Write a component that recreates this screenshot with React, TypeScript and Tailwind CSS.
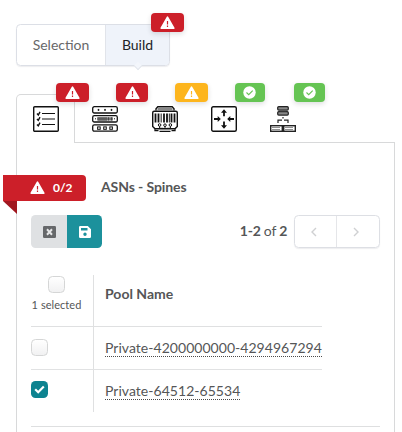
import type { ReactNode } from "react";

function WarningGlyph() {
  return (
    <svg width="15" height="14" viewBox="0 0 15 14">
      <path d="M7.5 1.2 13.8 12.2H1.2Z" fill="#fff" stroke="#fff" strokeWidth="1.6" strokeLinejoin="round" />
      <path d="M7.5 5V8.4M7.5 9.6V11" stroke="currentColor" strokeWidth="1.2" />
    </svg>
  );
}

function CheckGlyph() {
  return (
    <svg width="13" height="13" viewBox="0 0 13 13">
      <circle cx="6.5" cy="6.5" r="6.2" fill="#fff" />
      <path d="m3.5 6.5 2.2 2.2 4-4.1" fill="none" stroke="currentColor" strokeWidth="1.1" />
    </svg>
  );
}

function Badge({ className, children }: { className: string; children: ReactNode }) {
  return (
    <span className={`absolute flex h-[19px] items-center justify-center rounded-[4px] shadow-[0_2px_5px_rgba(34,36,38,0.15)] ${className}`}>
      {children}
    </span>
  );
}

function ChecklistIcon() {
  return (
    <svg width="26" height="26" viewBox="0 0 26 26" fill="none" stroke="#111">
      <rect x=".7" y=".7" width="24.6" height="24.6" rx="1" strokeWidth="1.4" />
      <path d="M9 7.5h13M9 13h13M9 18.5h13" strokeWidth="1.1" />
      <path d="m4 7.6 1.3 1.4L7 5.9M4 12.9l1.3 1.4L7 11.2M4 18.4l1.3 1.4L7 16.7" strokeWidth="1.4" />
    </svg>
  );
}

function RackIcon() {
  return (
    <svg width="26" height="26" viewBox="0 0 26 26" fill="none" stroke="#111">
      <rect x=".7" y=".7" width="24.6" height="6.3" rx="1.6" strokeWidth="1.3" />
      <rect x=".7" y="9.7" width="24.6" height="6.3" rx="1.6" strokeWidth="1.3" />
      <rect x=".7" y="18.9" width="24.6" height="6.3" rx="1.6" strokeWidth="1.3" />
      <path d="M6.5 2.9v2M5.5 3.9h2M13 2.9v2M12 3.9h2M19.5 2.9v2M18.5 3.9h2" strokeWidth=".9" />
      <rect x="5" y="11.3" width="16" height="3.2" fill="#777" stroke="none" />
      <path d="M6 12h9M6 14h9M16.5 11.3v3.2M19.5 11.3v3.2" stroke="#333" strokeWidth=".8" />
      <path d="M3 12.8h1M22 12.8h1" strokeWidth="1" />
      <rect x="5.6" y="20.9" width="2.6" height="2.4" strokeWidth="1" />
      <rect x="11.7" y="20.9" width="2.6" height="2.4" strokeWidth="1" />
      <rect x="17.8" y="20.9" width="2.6" height="2.4" strokeWidth="1" />
    </svg>
  );
}

function SwitchIcon() {
  return (
    <svg width="26" height="26" viewBox="0 0 26 26" fill="none" stroke="#111">
      <path d="M4 4.5V2.8L5.8.8h14.4L22 2.8v1.7" strokeWidth="1.4" />
      <path d="M5.5 3h15" stroke="#888" strokeWidth="2.2" />
      <path d="M2.2 5.2h21.6q1.5 0 1.5 1.5v13.7L23 22.8H3L.7 20.4V6.7q0-1.5 1.5-1.5Z" strokeWidth="1.4" />
      <path d="M3.5 7.5v9M6.5 7.5v9M12 7.5v9M15 7.5v9M19.5 7.5v9M22.5 7.5v9" strokeWidth="1.8" />
      <path d="M9.2 7.5v9M17.4 7.5v9" stroke="#444" strokeWidth="1.2" />
      <circle cx="7.6" cy="19" r="1.3" fill="#fff" />
      <circle cx="13" cy="19.2" r="1.3" fill="#fff" />
      <circle cx="18.4" cy="19" r="1.3" fill="#fff" />
      <path d="M3 23.2v1.4h3.5M23 23.2v1.4h-3.5M7.5 25.3h11" strokeWidth="1.3" />
      <path d="M7.6 20.3v2h3.8M13 20.5v2.4M18.4 20.3v2h-3.8" strokeWidth="1" />
    </svg>
  );
}

function RouterIcon() {
  return (
    <svg width="26" height="26" viewBox="0 0 26 26" fill="none" stroke="#111">
      <rect x=".7" y=".7" width="24.6" height="24.6" rx="1.5" strokeWidth="1.4" />
      <path d="M13 10.3V5.5M13 15.5v5M3 13h5M23 13h-5" strokeWidth="1.8" />
      <path d="M13 3.2 16 6.7h-6ZM13 22.8l3-3.5h-6ZM9.8 13 6.7 10v6ZM16.2 13l3.1-3v6Z" fill="#111" stroke="none" />
    </svg>
  );
}

function TopologyIcon() {
  return (
    <svg width="26" height="26" viewBox="0 0 26 26" fill="none" stroke="#222">
      <rect x="7.7" y=".7" width="10.6" height="3.4" rx="1" strokeWidth="1.2" fill="#888" />
      <rect x="7.7" y="5.7" width="10.6" height="3.4" rx="1" strokeWidth="1.2" fill="#888" />
      <path d="M9.5 4.9h7" stroke="#555" strokeWidth="1" />
      <path d="M13 11v1.5M8 17v-2.8h4M18 17v-2.8h-4" strokeWidth="1.2" />
      <rect x=".7" y="19.7" width="11.6" height="5.6" strokeWidth="1.4" />
      <rect x="13.7" y="19.7" width="11.6" height="5.6" strokeWidth="1.4" />
      <path d="M2.5 21.5h8M15.5 21.5h8M2.5 23.5h8M15.5 23.5h8" stroke="#222" strokeWidth="1" strokeDasharray="1 1" />
    </svg>
  );
}

const tabs = [
  { icon: <ChecklistIcon />, badge: <WarningGlyph />, style: "left-[39px] -top-[12px] w-[33px] bg-[#cc1f29] text-[#cc1f29]" },
  { icon: <RackIcon />, badge: <WarningGlyph />, style: "left-[41px] -top-[11px] w-[32px] bg-[#cc1f29] text-[#cc1f29]" },
  { icon: <SwitchIcon />, badge: <WarningGlyph />, style: "left-[41px] -top-[11px] w-[33px] bg-[#fdb51d] text-[#fdb51d]" },
  { icon: <RouterIcon />, badge: <CheckGlyph />, style: "left-[41px] -top-[11px] w-[30px] bg-[#65c453] text-[#65c453]" },
  { icon: <TopologyIcon />, badge: <CheckGlyph />, style: "left-[41px] -top-[11px] w-[31px] bg-[#65c453] text-[#65c453]" },
];

function Checkbox({ checked = false }: { checked?: boolean }) {
  if (checked) {
    return (
      <span className="flex size-[17px] items-center justify-center rounded-[4.5px] bg-[#0d8390]">
        <svg width="11" height="9" viewBox="0 0 11 9" fill="none" stroke="#fff" strokeWidth="2.2">
          <path d="m1.2 4.3 3 2.9L9.8 1.5" />
        </svg>
      </span>
    );
  }
  return <span className="block size-[17px] rounded-[4.5px] border border-[#d5d6d6] bg-linear-to-b from-white to-[#f1f1f2]" />;
}

function PoolRow({ name, checked, last }: { name: string; checked?: boolean; last?: boolean }) {
  return (
    <div className={`flex ${last ? "h-[42px]" : "h-[43px] border-b border-[#e1e2e3]"}`}>
      <div className={`w-[63px] border-r border-[#dfe0e1] ${last ? "pt-[11px]" : "pt-[12px]"}`}>
        <Checkbox checked={checked} />
      </div>
      <div className="pt-[12px] pl-[11px]">
        <span className="block h-[18px] border-b border-dotted border-[#4a4a4a] text-[14px] leading-[17px] tracking-[0.035px] whitespace-nowrap">{name}</span>
      </div>
    </div>
  );
}

export default function App() {
  return (
    <div className="h-[432px] w-[402px] overflow-hidden bg-white pt-[24px] pl-4 font-[Lato,sans-serif] text-[14px] text-[#555657]">
      <div className="relative flex h-[42px] w-[154px] rounded-[4.5px] border border-[#dcdfe6] shadow-[0_1px_1px_rgba(34,36,58,0.08)]">
        <div className="flex w-[89px] items-center justify-center border-r border-[#e1e4ea] pb-[2px] text-[#686869]">Selection</div>
        <div className="flex flex-1 items-center justify-center rounded-r bg-[#eff3fa] pb-[2px] text-[#202226]">Build</div>
        <span className="absolute -bottom-[4px] left-[118px] size-[6px] rotate-45 border-r border-b border-[#e3e6ec] bg-[#f3f6fb]" />
        <Badge className="-top-[12px] left-[134px] w-[33px] bg-[#cc1f29] text-[#cc1f29]">
          <WarningGlyph />
        </Badge>
      </div>

      <div className="mt-[28px] flex h-[49px] w-[379px] border-b border-[#d8d9da]">
        {tabs.map((tab, index) => (
          <div
            key={index}
            className={
              index === 0
                ? "relative h-[49px] w-[59px] shrink-0 rounded-t-[5px] border border-b-0 border-[#d8d9da] bg-white pt-[11px] pl-[16px]"
                : "relative h-[48px] w-[59.3px] shrink-0 pt-[12px] pl-[17.4px]"
            }
          >
            {tab.icon}
            <Badge className={tab.style}>{tab.badge}</Badge>
          </div>
        ))}
      </div>

      <div className="h-[300px] w-[379px] border-x border-[#d8d9da] pt-[32px] pl-[14px]">
        <div className="-ml-[28px] flex h-[26px] items-center">
          <div className="relative flex h-[26px] w-[83px] items-center rounded-r-[4px] bg-[#cc1f29] pl-[27px] text-[12px] font-bold text-white">
            <span className="text-[#cc1f29]"><WarningGlyph /></span>
            <span className="ml-[8px]">0/2</span>
            <svg className="absolute top-[26px] left-0" width="14" height="13" viewBox="0 0 14 13">
              <path d="M0 0h14v13Z" fill="#a11820" />
            </svg>
          </div>
          <div className="ml-[15px] pb-[2px] text-[14px] leading-[20px] font-bold tracking-[-0.1px]">ASNs - Spines</div>
        </div>

        <div className="mt-[14px] flex h-[33px] w-[349px] items-center">
          <div className="flex h-[33px] w-[71px] overflow-hidden rounded-[4.5px]">
            <div className="flex w-[36px] items-center justify-center bg-[#dfe1e3]">
              <svg width="13" height="12" viewBox="0 0 13 12">
                <rect width="13" height="12" rx="1.3" fill="#66686a" />
                <path d="m4 3.3 5 5.4M9 3.3 4 8.7" stroke="#e5e6e7" strokeWidth="2" />
              </svg>
            </div>
            <div className="flex w-[35px] items-center justify-center bg-[#1c919c]">
              <svg width="12" height="12" viewBox="0 0 12 12">
                <path fillRule="evenodd" d="M1.2 0h7.6L12 3.2v7.6q0 1.2-1.2 1.2H1.2Q0 12 0 10.8V1.2Q0 0 1.2 0ZM2 2v2.6h6.5V2ZM6 6.6A1.7 1.7 0 1 0 6 10a1.7 1.7 0 0 0 0-3.4Z" fill="#fff" />
              </svg>
            </div>
          </div>
          <div className="ml-auto pb-[3px] tracking-[-0.25px] whitespace-nowrap">
            <b>1-2</b> of <b>2</b>
          </div>
          <div className="ml-[7px] flex h-[33px] w-[86px] rounded-[4.5px] border border-[#dddfe4] text-[#cfd0d2] shadow-[0_1px_1px_rgba(34,36,58,0.08)]">
            <div className="flex w-[42px] items-center justify-center border-r border-[#e5e6e9] pr-[3px]">
              <svg width="6" height="10" viewBox="0 0 6 10" fill="none" stroke="currentColor" strokeWidth="1.4"><path d="M5 1 1 5l4 4" /></svg>
            </div>
            <div className="flex flex-1 items-center justify-center pr-[4px]">
              <svg width="6" height="10" viewBox="0 0 6 10" fill="none" stroke="currentColor" strokeWidth="1.4"><path d="m1 1 4 4-4 4" /></svg>
            </div>
          </div>
        </div>

        <div className="mt-[27px] h-[152px] w-[349px] border-b border-[#dedfe0]">
          <div className="w-[291px]">
            <div className="flex h-[52px] border-b border-[#dfe0e1]">
              <div className="flex w-[63px] flex-col items-center border-r border-[#dfe0e1] pt-px pr-[11px]">
                <Checkbox />
                <span className="mt-[4px] text-[11px] leading-[15px] tracking-[0.05px] whitespace-nowrap">1 selected</span>
              </div>
              <div className="pt-[9px] pl-[11px] leading-[20px] font-bold">Pool Name</div>
            </div>
            <PoolRow name="Private-4200000000-4294967294" />
            <PoolRow name="Private-64512-65534" checked last />
          </div>
        </div>
      </div>
    </div>
  );
}
